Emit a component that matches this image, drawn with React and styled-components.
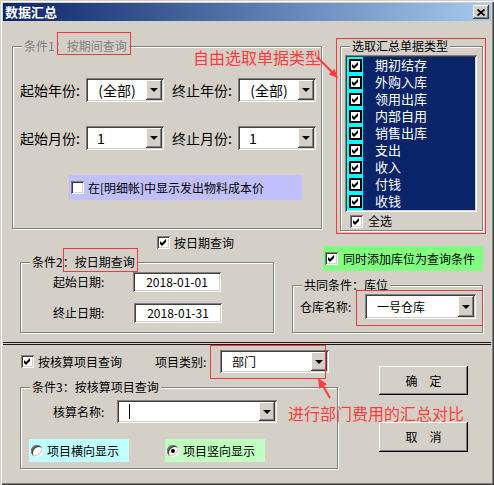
import React from "react";
import styled, { createGlobalStyle } from "styled-components";

const FONT = `"Noto Sans CJK SC", "Noto Sans", sans-serif`;

const GlobalStyle = createGlobalStyle`
  html, body {
    margin: 0;
    padding: 0;
    background: #d4d0c8;
  }
  body {
    font-family: ${FONT};
    font-size: 12px;
    line-height: 14px;
    color: #000;
  }
`;

//Window frame
const Window = styled.div`
  position: relative;
  box-sizing: border-box;
  width: 494px;
  height: 485px;
  padding: 3px;
  background: #d4d0c8;
  overflow: hidden;
  box-shadow: inset 1px 1px 0 #d4d0c8, inset 2px 2px 0 #fff,
    inset -1px -1px 0 #404040, inset -2px -2px 0 #808080;
`;

const TitleBar = styled.div`
  display: flex;
  align-items: center;
  justify-content: space-between;
  height: 18px;
  padding: 0 2px;
  background: linear-gradient(to right, #0a246a, #a6caf0);
`;

const Title = styled.span`
  color: #fff;
  font-weight: bold;
  font-size: 13px;
  line-height: 18px;
`;

const raised = `
  background: #d4d0c8;
  box-shadow: inset -1px -1px 0 #404040, inset 1px 1px 0 #fff,
    inset -2px -2px 0 #808080, inset 2px 2px 0 #d4d0c8;
`;

const sunken = `
  box-shadow: inset 1px 1px 0 #808080, inset -1px -1px 0 #fff,
    inset 2px 2px 0 #404040, inset -2px -2px 0 #d4d0c8;
`;

const CloseButton = styled.span`
  display: flex;
  align-items: center;
  justify-content: center;
  box-sizing: border-box;
  width: 16px;
  height: 14px;
  ${raised}
`;

const Body = styled.div`
  display: flex;
  flex-direction: column;
`;

const Row = styled.div`
  display: flex;
  align-items: flex-start;
  margin-top: ${(p) => p.$mt || 0}px;
  margin-left: ${(p) => p.$ml || 0}px;
`;

const Column = styled.div`
  display: flex;
  flex-direction: column;
  flex: none;
  width: ${(p) => (p.$w ? `${p.$w}px` : "auto")};
  margin-left: ${(p) => p.$ml || 0}px;
`;

//Etched group box
const Group = styled.div`
  position: relative;
  box-sizing: border-box;
  flex: none;
  width: ${(p) => p.$w}px;
  height: ${(p) => p.$h}px;
  margin-top: ${(p) => p.$mt || 0}px;
  padding: ${(p) => p.$pt || 0}px 0 0 ${(p) => p.$pl || 0}px;
  border: 1px solid #808080;
  box-shadow: inset 1px 1px 0 #fff, 1px 1px 0 #fff;
`;

const Legend = styled.span`
  position: absolute;
  left: 9px;
  top: -8px;
  padding: 0 2px;
  background: #d4d0c8;
  white-space: nowrap;
  color: ${(p) => (p.$disabled ? "#808080" : "#000")};
`;

//Red annotation frame drawn over a control
const Marked = styled.span`
  position: relative;
  display: ${(p) => (p.$block ? "block" : "inline-flex")};
  flex: none;
  margin-top: ${(p) => p.$mt || 0}px;
  margin-left: ${(p) => p.$ml || 0}px;
  &::after {
    content: "";
    position: absolute;
    top: ${(p) => p.$t}px;
    right: ${(p) => p.$r}px;
    bottom: ${(p) => p.$b}px;
    left: ${(p) => p.$l}px;
    border: 1px solid #ee3b3b;
    pointer-events: none;
  }
`;

const FieldRow = styled.div`
  display: flex;
  align-items: center;
  flex: none;
  height: ${(p) => (p.$h ? `${p.$h}px` : "auto")};
  margin-top: ${(p) => p.$mt || 0}px;
  margin-left: ${(p) => p.$ml || 0}px;
`;

const FieldLabel = styled.span`
  flex: none;
  width: ${(p) => p.$w}px;
  margin-left: ${(p) => p.$ml || 0}px;
  font-size: ${(p) => p.$size || 12}px;
  line-height: 16px;
  white-space: nowrap;
`;

//Combo box
const Combo = styled.div`
  display: flex;
  align-items: stretch;
  box-sizing: border-box;
  flex: none;
  width: ${(p) => p.$w}px;
  height: ${(p) => p.$h}px;
  padding: 2px;
  background: #fff;
  ${sunken}
`;

const ComboText = styled.span`
  flex: 1;
  display: flex;
  align-items: center;
  justify-content: ${(p) => (p.$center ? "center" : "flex-start")};
  padding-left: ${(p) => p.$pad || 0}px;
  font-size: ${(p) => p.$size || 12}px;
  white-space: nowrap;
`;

const Caret = styled.span`
  display: inline-block;
  width: 1px;
  height: 15px;
  background: #000;
`;

const DropButton = styled.span`
  display: flex;
  align-items: center;
  justify-content: center;
  box-sizing: border-box;
  width: 16px;
  flex: none;
  ${raised}
  &::after {
    content: "";
    border-left: 4px solid transparent;
    border-right: 4px solid transparent;
    border-top: 4px solid #000;
  }
`;

const TextInput = styled.div`
  display: flex;
  align-items: center;
  justify-content: center;
  box-sizing: border-box;
  flex: none;
  width: ${(p) => p.$w}px;
  height: ${(p) => p.$h}px;
  margin-left: ${(p) => p.$ml || 0}px;
  background: #fff;
  ${sunken}
`;

//Check boxes and radios
const CheckBox = styled.span`
  display: inline-flex;
  align-items: center;
  justify-content: center;
  box-sizing: border-box;
  flex: none;
  width: 13px;
  height: 13px;
  margin-left: ${(p) => p.$ml || 0}px;
  background: #fff;
  ${sunken}
`;

const ListCheck = styled.span`
  display: inline-flex;
  align-items: center;
  justify-content: center;
  box-sizing: border-box;
  width: 13px;
  height: 13px;
  border: 2px solid #000;
  background: #fff;
`;

const Radio = styled.span`
  display: inline-flex;
  align-items: center;
  justify-content: center;
  box-sizing: border-box;
  flex: none;
  width: 12px;
  height: 12px;
  border-radius: 50%;
  background: #fff;
  ${sunken}
  &::after {
    content: "";
    display: ${(p) => (p.$on ? "block" : "none")};
    width: 4px;
    height: 4px;
    border-radius: 50%;
    background: #000;
  }
`;

const ItemText = styled.span`
  margin-left: ${(p) => p.$ml || 4}px;
  white-space: nowrap;
`;

const Tinted = styled.div`
  display: flex;
  align-items: center;
  box-sizing: border-box;
  flex: none;
  width: ${(p) => p.$w}px;
  height: ${(p) => p.$h}px;
  margin-top: ${(p) => p.$mt || 0}px;
  margin-left: ${(p) => p.$ml || 0}px;
  padding-left: 2px;
  background: ${(p) => p.$bg};
`;

//Bill type list
const ListBox = styled.div`
  box-sizing: border-box;
  width: 132px;
  height: 157px;
  padding: 2px;
  background: #0a246a;
  ${sunken}
`;

const ListItem = styled.div`
  display: flex;
  align-items: center;
  height: 17px;
  color: #fff;
  font-family: "Liberation Sans", ${FONT};
  font-size: 13px;
  line-height: 15px;
`;

const CyanCell = styled.span`
  display: flex;
  align-items: center;
  box-sizing: border-box;
  width: 16px;
  height: 100%;
  padding-left: 2px;
  background: #00ffff;
`;

const Separator = styled.div`
  height: 1px;
  margin-top: 9px;
  border-top: 1px solid #1a1a1a;
  border-bottom: 1px solid #1a1a1a;
`;

const PushButton = styled.div`
  display: flex;
  align-items: center;
  justify-content: center;
  box-sizing: border-box;
  width: 89px;
  height: ${(p) => p.$h}px;
  margin-top: ${(p) => p.$mt || 0}px;
  font-size: 12px;
  background: #d4d0c8;
  box-shadow: inset -1px -1px 0 #000, inset 1px 1px 0 #fff,
    inset -2px -2px 0 #808080, inset 2px 2px 0 #d4d0c8;
`;

//Annotations
const Note = styled.div`
  position: absolute;
  left: ${(p) => p.$x}px;
  top: ${(p) => p.$y}px;
  color: #ff3c3c;
  font-size: 16px;
  line-height: 18px;
  white-space: nowrap;
`;

const ArrowSvg = styled.svg`
  position: absolute;
  left: ${(p) => p.$x}px;
  top: ${(p) => p.$y}px;
  overflow: visible;
`;

const Tick = () => (
  <svg width="7" height="7" viewBox="0 0 7 7">
    <polygon points="0,2 2,4 6,0 6,3 2,7 0,5" fill="#000" />
  </svg>
);

const Check = ({ on = true, ml }) => <CheckBox $ml={ml}>{on && <Tick />}</CheckBox>;

const Dropdown = ({ w, h, children, ...rest }) => (
  <Combo $w={w} $h={h}>
    <ComboText {...rest}>{children}</ComboText>
    <DropButton />
  </Combo>
);

const billTypes = [
  "期初结存",
  "外购入库",
  "领用出库",
  "内部自用",
  "销售出库",
  "支出",
  "收入",
  "付钱",
  "收钱",
];

const App = () => {
  return (
    <>
      <GlobalStyle />
      <Window>
        <TitleBar>
          <Title>数据汇总</Title>
          <CloseButton>
            <svg width="8" height="7" viewBox="0 0 8 7">
              <path d="M0.5 0.5 L7.5 6.5 M7.5 0.5 L0.5 6.5" stroke="#000" strokeWidth="1.8" />
            </svg>
          </CloseButton>
        </TitleBar>

        <Body>
          {/* Condition 1 and bill type list */}
          <Row $mt={17} $ml={9}>
            <Group $w={310} $h={183} $mt={8} $pt={31} $pl={7}>
              <Legend $disabled>
                条件1：
                <Marked $t={-7} $r={-4} $b={-2} $l={-10}>按期间查询</Marked>
              </Legend>
              <FieldRow>
                <FieldLabel $w={66} $size={14}>起始年份:</FieldLabel>
                <Dropdown w={78} h={24} $size={14} $center>(全部)</Dropdown>
                <FieldLabel $w={66} $size={14} $ml={8}>终止年份:</FieldLabel>
                <Dropdown w={78} h={24} $size={14} $center>(全部)</Dropdown>
              </FieldRow>
              <FieldRow $mt={24}>
                <FieldLabel $w={66} $size={14}>起始月份:</FieldLabel>
                <Dropdown w={78} h={24} $size={14} $pad={9}>1</Dropdown>
                <FieldLabel $w={66} $size={14} $ml={8}>终止月份:</FieldLabel>
                <Dropdown w={78} h={24} $size={14} $pad={9}>1</Dropdown>
              </FieldRow>
              <Tinted $bg="#c0c0ff" $w={233} $h={25} $mt={25} $ml={49}>
                <Check on={false} />
                <ItemText>在[明细帐]中显示发出物料成本价</ItemText>
              </Tinted>
            </Group>

            <Marked $block $mt={8} $ml={18} $t={-8} $r={-3} $b={-3} $l={-4}>
              <Group $w={143} $h={185} $pt={8} $pl={4}>
                <Legend>选取汇总单据类型</Legend>
                <ListBox>
                  {billTypes.map((name) => (
                    <ListItem key={name}>
                      <CyanCell>
                        <ListCheck>
                          <Tick />
                        </ListCheck>
                      </CyanCell>
                      <ItemText $ml={12}>{name}</ItemText>
                    </ListItem>
                  ))}
                </ListBox>
                <FieldRow $mt={2} $ml={5}>
                  <Check />
                  <ItemText $ml={5}>全选</ItemText>
                </FieldRow>
              </Group>
            </Marked>
          </Row>

          {/* Condition 2 and store */}
          <Row $ml={17}>
            <Column $w={254}>
              <FieldRow $mt={5} $ml={137} $h={13}>
                <Check />
                <ItemText>按日期查询</ItemText>
              </FieldRow>
              <Group $w={254} $h={71} $mt={13} $pt={9} $pl={32}>
                <Legend>
                  条件2：
                  <Marked $t={-7} $r={-3} $b={-3} $l={-12}>按日期查询</Marked>
                </Legend>
                <FieldRow>
                  <FieldLabel $w={80}>起始日期:</FieldLabel>
                  <TextInput $w={88} $h={20}>2018-01-01</TextInput>
                </FieldRow>
                <FieldRow $mt={11}>
                  <FieldLabel $w={80}>终止日期:</FieldLabel>
                  <TextInput $w={88} $h={20} $ml={1}>2018-01-31</TextInput>
                </FieldRow>
              </Group>
            </Column>

            <Column $ml={18}>
              <Tinted $bg="#80ff80" $w={160} $h={25} $mt={15} $ml={31}>
                <Check />
                <ItemText $ml={5}>同时添加库位为查询条件</ItemText>
              </Tinted>
              <Group $w={191} $h={48} $mt={14} $pt={8} $pl={7}>
                <Legend>共同条件：库位</Legend>
                <FieldRow>
                  <FieldLabel $w={65}>仓库名称:</FieldLabel>
                  <Marked $t={-4} $r={-7} $b={-7} $l={-9}>
                    <Dropdown w={111} h={25} $pad={10}>一号仓库</Dropdown>
                  </Marked>
                </FieldRow>
              </Group>
            </Column>
          </Row>

          <Separator />

          {/* Condition 3 and buttons */}
          <Row $ml={17}>
            <Column $w={318}>
              <FieldRow $mt={5} $h={23} $ml={1}>
                <FieldLabel $w={134}>
                  <FieldRow>
                    <Check />
                    <ItemText>按核算项目查询</ItemText>
                  </FieldRow>
                </FieldLabel>
                <FieldLabel $w={65}>项目类别:</FieldLabel>
                <Marked $t={-5} $r={3} $b={-6} $l={-10}>
                  <Dropdown w={109} h={23} $pad={10}>部门</Dropdown>
                </Marked>
              </FieldRow>
              <Group $w={318} $h={82} $mt={14} $pt={12} $pl={8}>
                <Legend>条件3：按核算项目查询</Legend>
                <FieldRow $ml={24}>
                  <FieldLabel $w={64}>核算名称:</FieldLabel>
                  <Dropdown w={160} h={23} $pad={10}>
                    <Caret />
                  </Dropdown>
                </FieldRow>
                <FieldRow $mt={16}>
                  <Tinted $bg="#c0ffff" $w={100} $h={23}>
                    <Radio />
                    <ItemText>项目横向显示</ItemText>
                  </Tinted>
                  <Tinted $bg="#c0ffc0" $w={100} $h={23} $ml={36}>
                    <Radio $on />
                    <ItemText>项目竖向显示</ItemText>
                  </Tinted>
                </FieldRow>
              </Group>
            </Column>

            <Column $ml={41}>
              <PushButton $h={29} $mt={21}>确　定</PushButton>
              <PushButton $h={30} $mt={27}>取　消</PushButton>
            </Column>
          </Row>
        </Body>

        <Note $x={193} $y={48}>自由选取单据类型</Note>
        <ArrowSvg $x={312} $y={52} width="30" height="30" viewBox="0 0 30 30">
          <line x1="5" y1="5" x2="21" y2="21" stroke="#ff3c3c" strokeWidth="2" />
          <polygon points="26,26 16.8,22.4 22.4,16.8" fill="#ff3c3c" />
        </ArrowSvg>

        <Note $x={288} $y={404}>进行部门费用的汇总对比</Note>
        <ArrowSvg $x={312} $y={372} width="24" height="30" viewBox="0 0 24 30">
          <line x1="18" y1="26" x2="11" y2="14" stroke="#ff3c3c" strokeWidth="2" />
          <polygon points="6,6 15,12.3 7.3,16.9" fill="#ff3c3c" />
        </ArrowSvg>
      </Window>
    </>
  );
};

export default App;
